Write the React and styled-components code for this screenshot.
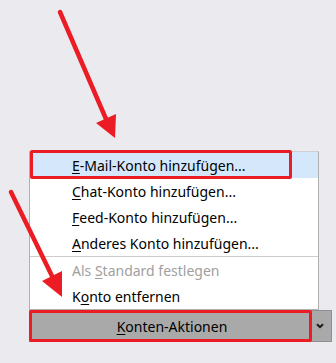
import React from "react"
import styled, { createGlobalStyle } from "styled-components"

const GlobalStyle = createGlobalStyle`
  html, body {
    margin: 0;
    padding: 0;
    background: #ebeaef;
  }
  body {
    font-family: "Noto Sans", "Open Sans", sans-serif;
  }
`

const items = [
  { key: "E", rest: "-Mail-Konto hinzufügen...", active: true },
  { key: "C", rest: "hat-Konto hinzufügen..." },
  { key: "F", rest: "eed-Konto hinzufügen..." },
  { key: "A", rest: "nderes Konto hinzufügen..." },
]

const App = () => {
  return (
    <>
      <GlobalStyle />
      <Stage>
        <Menu>
          {items.map((it) => (
            <Item key={it.rest} $active={it.active}>
              <u>{it.key}</u>
              {it.rest}
              {it.active && <Mark $w={262} $h={29} $top={-2} $left={0} />}
            </Item>
          ))}
          <Separator />
          <Item $disabled>
            Als <u>S</u>tandard festlegen
          </Item>
          <Item>
            K<u>o</u>nto entfernen
          </Item>
        </Menu>
        <SplitButton>
          <MainButton>
            <u>K</u>onten-Aktionen
            <Mark $w={283} $h={32} $top={-1} $left={-1} />
          </MainButton>
          <DropButton>
            <svg width="8" height="6" viewBox="0 0 8 6">
              <path d="M1 1.2 L4 4.2 L7 1.2" fill="none" stroke="#1a1a1a" strokeWidth="2" />
            </svg>
          </DropButton>
        </SplitButton>
        <Arrows width="336" height="363" viewBox="0 0 336 363">
          <g fill="#ec1c24" stroke="#ec1c24">
            <line x1="60" y1="12" x2="106" y2="119" strokeWidth="4.5" strokeLinecap="round" />
            <polygon points="96,123 116,114 115,138" stroke="none" />
            <line x1="11" y1="192" x2="52" y2="276" strokeWidth="4.5" strokeLinecap="round" />
            <polygon points="42,281 62,271 62,297" stroke="none" />
          </g>
        </Arrows>
      </Stage>
    </>
  )
}

const Stage = styled.div`
  position: relative;
  width: 336px;
  height: 363px;
  box-sizing: border-box;
  padding: 151px 0 0 29px;
  overflow: hidden;
`

const Menu = styled.div`
  width: 290px;
  box-sizing: border-box;
  background: #ffffff;
  border: 1px solid #b0b0b0;
  border-top-color: #cfcfcf;
`

const Item = styled.div`
  position: relative;
  height: 26px;
  display: flex;
  align-items: center;
  padding-left: 42px;
  font-size: 14px;
  white-space: pre;
  color: ${(p) => (p.$disabled ? "#a0a0a0" : "#000000")};
  background: ${(p) => (p.$active ? "#d5e8fb" : "transparent")};

  u {
    text-decoration-thickness: 1px;
    text-underline-offset: 2px;
  }
`

const Mark = styled.span`
  position: absolute;
  top: ${(p) => p.$top}px;
  left: ${(p) => p.$left}px;
  width: ${(p) => p.$w}px;
  height: ${(p) => p.$h}px;
  box-sizing: border-box;
  border: 3px solid #ec1c24;
  border-radius: 2px;
  pointer-events: none;
`

const Separator = styled.div`
  height: 1px;
  background: #cccccc;
`

const SplitButton = styled.div`
  display: flex;
  width: 303px;
  height: 32px;
`

const MainButton = styled.div`
  position: relative;
  flex: 1;
  display: flex;
  align-items: center;
  justify-content: center;
  padding-left: 3px;
  background: #a9a9a9;
  border: 1px solid #8f8f8f;
  font-size: 14px;
  color: #000000;

  u {
    text-decoration-thickness: 1px;
    text-underline-offset: 2px;
  }
`

const DropButton = styled.div`
  width: 20px;
  display: flex;
  align-items: center;
  justify-content: center;
  padding-right: 3px;
  box-sizing: border-box;
  background: #a9a9a9;
  border: 1px solid #8f8f8f;
  border-left: none;
`

const Arrows = styled.svg`
  position: absolute;
  top: 0;
  left: 0;
  pointer-events: none;
`

export default App
